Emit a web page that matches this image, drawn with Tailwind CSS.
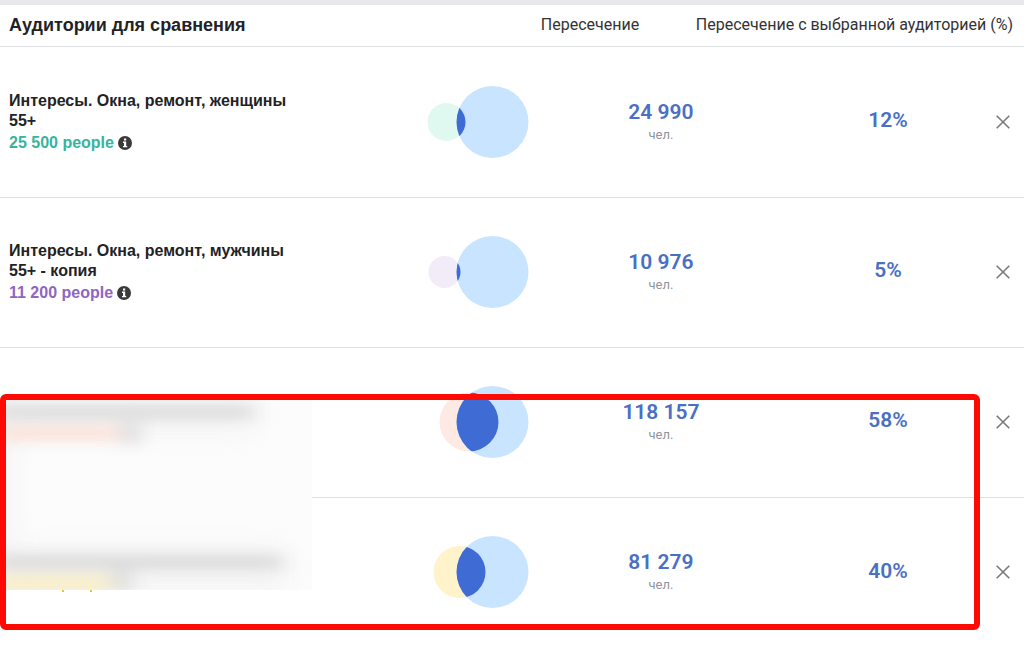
<!DOCTYPE html>
<html lang="ru">
<head>
  <meta charset="UTF-8" />
  <meta name="viewport" content="width=device-width, initial-scale=1.0"/>
  <title>Пересечение аудиторий</title>
  <script src="https://cdn.jsdelivr.net/npm/@tailwindcss/browser@4"></script>
</head>

<body class="relative min-h-screen overflow-x-hidden bg-white font-['Liberation_Sans',Arial,sans-serif] text-[#1f2326]">
  <!-- Icons -->
  <svg class="hidden">
    <symbol id="info" viewBox="0 0 14 14">
      <circle cx="7" cy="7" r="7" fill="#3a3a3a" />
      <path d="M6 2.6h2.2v2H6zM5 5.6h3.2v4.3h1v1.3H5V9.900h1V6.900H5z" fill="#fff" />
    </symbol>
    <symbol id="close" viewBox="0 0 14 14">
      <path d="M0.700 0.700L13.300 13.300M13.300 0.700L0.700 13.300" stroke="#7a7a7a" stroke-width="1.6" fill="none" />
    </symbol>
  </svg>

  <div class="h-[5px] bg-[#e9e9ec]"></div>

  <table class="w-full table-fixed">
    <colgroup>
      <col />
      <col class="w-[142px]" />
      <col class="w-[264px]" />
      <col class="w-[190px]" />
      <col class="w-[41px]" />
    </colgroup>
    <thead>
      <tr class="h-[41px] border-b border-[#dddfe2]">
        <th class="pl-[9px] text-left text-lg font-bold">Аудитории для сравнения</th>
        <th colspan="2" class="font-[Roboto,sans-serif] text-base font-normal text-[#333]">Пересечение</th>
        <th colspan="2" class="font-[Roboto,sans-serif] text-base font-normal text-[#333]">
          <div class="flex justify-end pr-[11px] whitespace-nowrap">Пересечение с выбранной аудиторией (%)</div>
        </th>
      </tr>
    </thead>
    <tbody>
      <tr class="h-[151px] border-b border-[#dddfe2]">
        <td class="pt-0.5 pl-[9px]">
          <div class="w-[290px] font-bold leading-5">Интересы. Окна, ремонт, женщины 55+</div>
          <div class="flex items-center gap-1 font-bold leading-6 text-[#35b5a0]">25 500 people <svg class="size-[14px]"><use href="#info" /></svg></div>
        </td>
        <td>
          <svg class="ml-auto h-[74px] w-[102px]" viewBox="0 0 102 74">
            <clipPath id="c1"><circle cx="19.500" cy="37" r="19" /></clipPath>
            <circle cx="19.500" cy="37" r="19" fill="#dff9f0" />
            <circle cx="65.500" cy="37" r="36" fill="#c9e4ff" />
            <circle cx="65.500" cy="37" r="36" fill="#3f6bd5" clip-path="url(#c1)" />
          </svg>
        </td>
        <td class="pt-0.5 text-center font-[Roboto,sans-serif]">
          <div class="text-[21px] font-semibold leading-6 text-[#4a6fc4]">24 990</div>
          <div class="text-[13px] leading-[22px] text-[#90949c]">чел.</div>
        </td>
        <td class="pb-0.5 text-center font-[Roboto,sans-serif] text-[21px] font-semibold text-[#4a6fc4]">12%</td>
        <td><button type="button" aria-label="Удалить" class="mx-auto block"><svg class="size-[14px]"><use href="#close" /></svg></button></td>
      </tr>
      <tr class="h-[150px] border-b border-[#dddfe2]">
        <td class="pt-0.5 pl-[9px]">
          <div class="w-[290px] font-bold leading-5">Интересы. Окна, ремонт, мужчины 55+ - копия</div>
          <div class="flex items-center gap-1 font-bold leading-6 text-[#9065c0]">11 200 people <svg class="size-[14px]"><use href="#info" /></svg></div>
        </td>
        <td>
          <svg class="ml-auto h-[74px] w-[102px]" viewBox="0 0 102 74">
            <clipPath id="c2"><circle cx="17.500" cy="37" r="16" /></clipPath>
            <circle cx="17.500" cy="37" r="16" fill="#f1ecf8" />
            <circle cx="65.500" cy="37" r="36" fill="#c9e4ff" />
            <circle cx="65.500" cy="37" r="36" fill="#3f6bd5" clip-path="url(#c2)" />
          </svg>
        </td>
        <td class="pt-0.5 text-center font-[Roboto,sans-serif]">
          <div class="text-[21px] font-semibold leading-6 text-[#4a6fc4]">10 976</div>
          <div class="text-[13px] leading-[22px] text-[#90949c]">чел.</div>
        </td>
        <td class="pb-0.5 text-center font-[Roboto,sans-serif] text-[21px] font-semibold text-[#4a6fc4]">5%</td>
        <td><button type="button" aria-label="Удалить" class="mx-auto block"><svg class="size-[14px]"><use href="#close" /></svg></button></td>
      </tr>
      <tr class="h-[150px] border-b border-[#dddfe2]">
        <td></td>
        <td>
          <svg class="ml-auto h-[74px] w-[102px]" viewBox="0 0 102 74">
            <clipPath id="c3"><circle cx="42" cy="37" r="29.500" /></clipPath>
            <circle cx="42" cy="37" r="29.500" fill="#ffe9e3" />
            <circle cx="65.500" cy="37" r="36" fill="#c9e4ff" />
            <circle cx="65.500" cy="37" r="36" fill="#3f6bd5" clip-path="url(#c3)" />
          </svg>
        </td>
        <td class="pt-0.5 text-center font-[Roboto,sans-serif]">
          <div class="text-[21px] font-semibold leading-6 text-[#4a6fc4]">118 157</div>
          <div class="text-[13px] leading-[22px] text-[#90949c]">чел.</div>
        </td>
        <td class="pb-0.5 text-center font-[Roboto,sans-serif] text-[21px] font-semibold text-[#4a6fc4]">58%</td>
        <td><button type="button" aria-label="Удалить" class="mx-auto block"><svg class="size-[14px]"><use href="#close" /></svg></button></td>
      </tr>
      <tr class="h-[150px]">
        <td></td>
        <td>
          <svg class="ml-auto h-[74px] w-[102px]" viewBox="0 0 102 74">
            <clipPath id="c4"><circle cx="32.500" cy="37" r="26" /></clipPath>
            <circle cx="32.500" cy="37" r="26" fill="#fff3cb" />
            <circle cx="65.500" cy="37" r="36" fill="#c9e4ff" />
            <circle cx="65.500" cy="37" r="36" fill="#3f6bd5" clip-path="url(#c4)" />
          </svg>
        </td>
        <td class="pt-0.5 text-center font-[Roboto,sans-serif]">
          <div class="text-[21px] font-semibold leading-6 text-[#4a6fc4]">81 279</div>
          <div class="text-[13px] leading-[22px] text-[#90949c]">чел.</div>
        </td>
        <td class="pb-0.5 text-center font-[Roboto,sans-serif] text-[21px] font-semibold text-[#4a6fc4]">40%</td>
        <td><button type="button" aria-label="Удалить" class="mx-auto block"><svg class="size-[14px]"><use href="#close" /></svg></button></td>
      </tr>
    </tbody>
  </table>

  <!-- Highlight frame with the hidden names -->
  <div class="pointer-events-none absolute top-[394px] right-11 left-0 h-[236px] rounded-md border-6 border-[#fc0a04]">
    <svg class="h-[192px] w-[306px]" viewBox="0 0 306 192">
      <defs>
        <filter id="soft" filterUnits="userSpaceOnUse" x="-40" y="-40" width="386" height="280" color-interpolation-filters="sRGB"><feGaussianBlur stdDeviation="10 7" /></filter>
        <filter id="wide" filterUnits="userSpaceOnUse" x="-60" y="-60" width="426" height="320" color-interpolation-filters="sRGB"><feGaussianBlur stdDeviation="14" /></filter>
        <clipPath id="patch"><rect width="306" height="190" /></clipPath>
      </defs>
      <rect width="306" height="190" fill="#fcfcfc" />
      <g clip-path="url(#patch)">
        <g filter="url(#wide)">
          <rect x="-20" y="-10" width="22" height="220" fill="#f1f1f1" />
          <rect x="-20" y="0" width="270" height="30" fill="#f3f3f3" />
          <rect x="-20" y="150" width="300" height="40" fill="#f3f3f3" />
        </g>
        <g filter="url(#soft)">
          <rect x="-10" y="6" width="258" height="12" fill="#d8d8d8" />
          <rect x="-10" y="28" width="124" height="11" fill="#fddbd0" />
          <rect x="118" y="22" width="14" height="22" fill="#d6d6d6" />
          <rect x="-10" y="156" width="286" height="12" fill="#d6d6d6" />
          <rect x="-10" y="175" width="114" height="18" fill="#f7edc6" />
          <rect x="108" y="170" width="16" height="22" fill="#d8d8d8" />
        </g>
      </g>
      <path d="M56 190h2v2h-2zM84 190h2v2h-2z" fill="#e3c63a" />
    </svg>
  </div>
</body>
</html>
